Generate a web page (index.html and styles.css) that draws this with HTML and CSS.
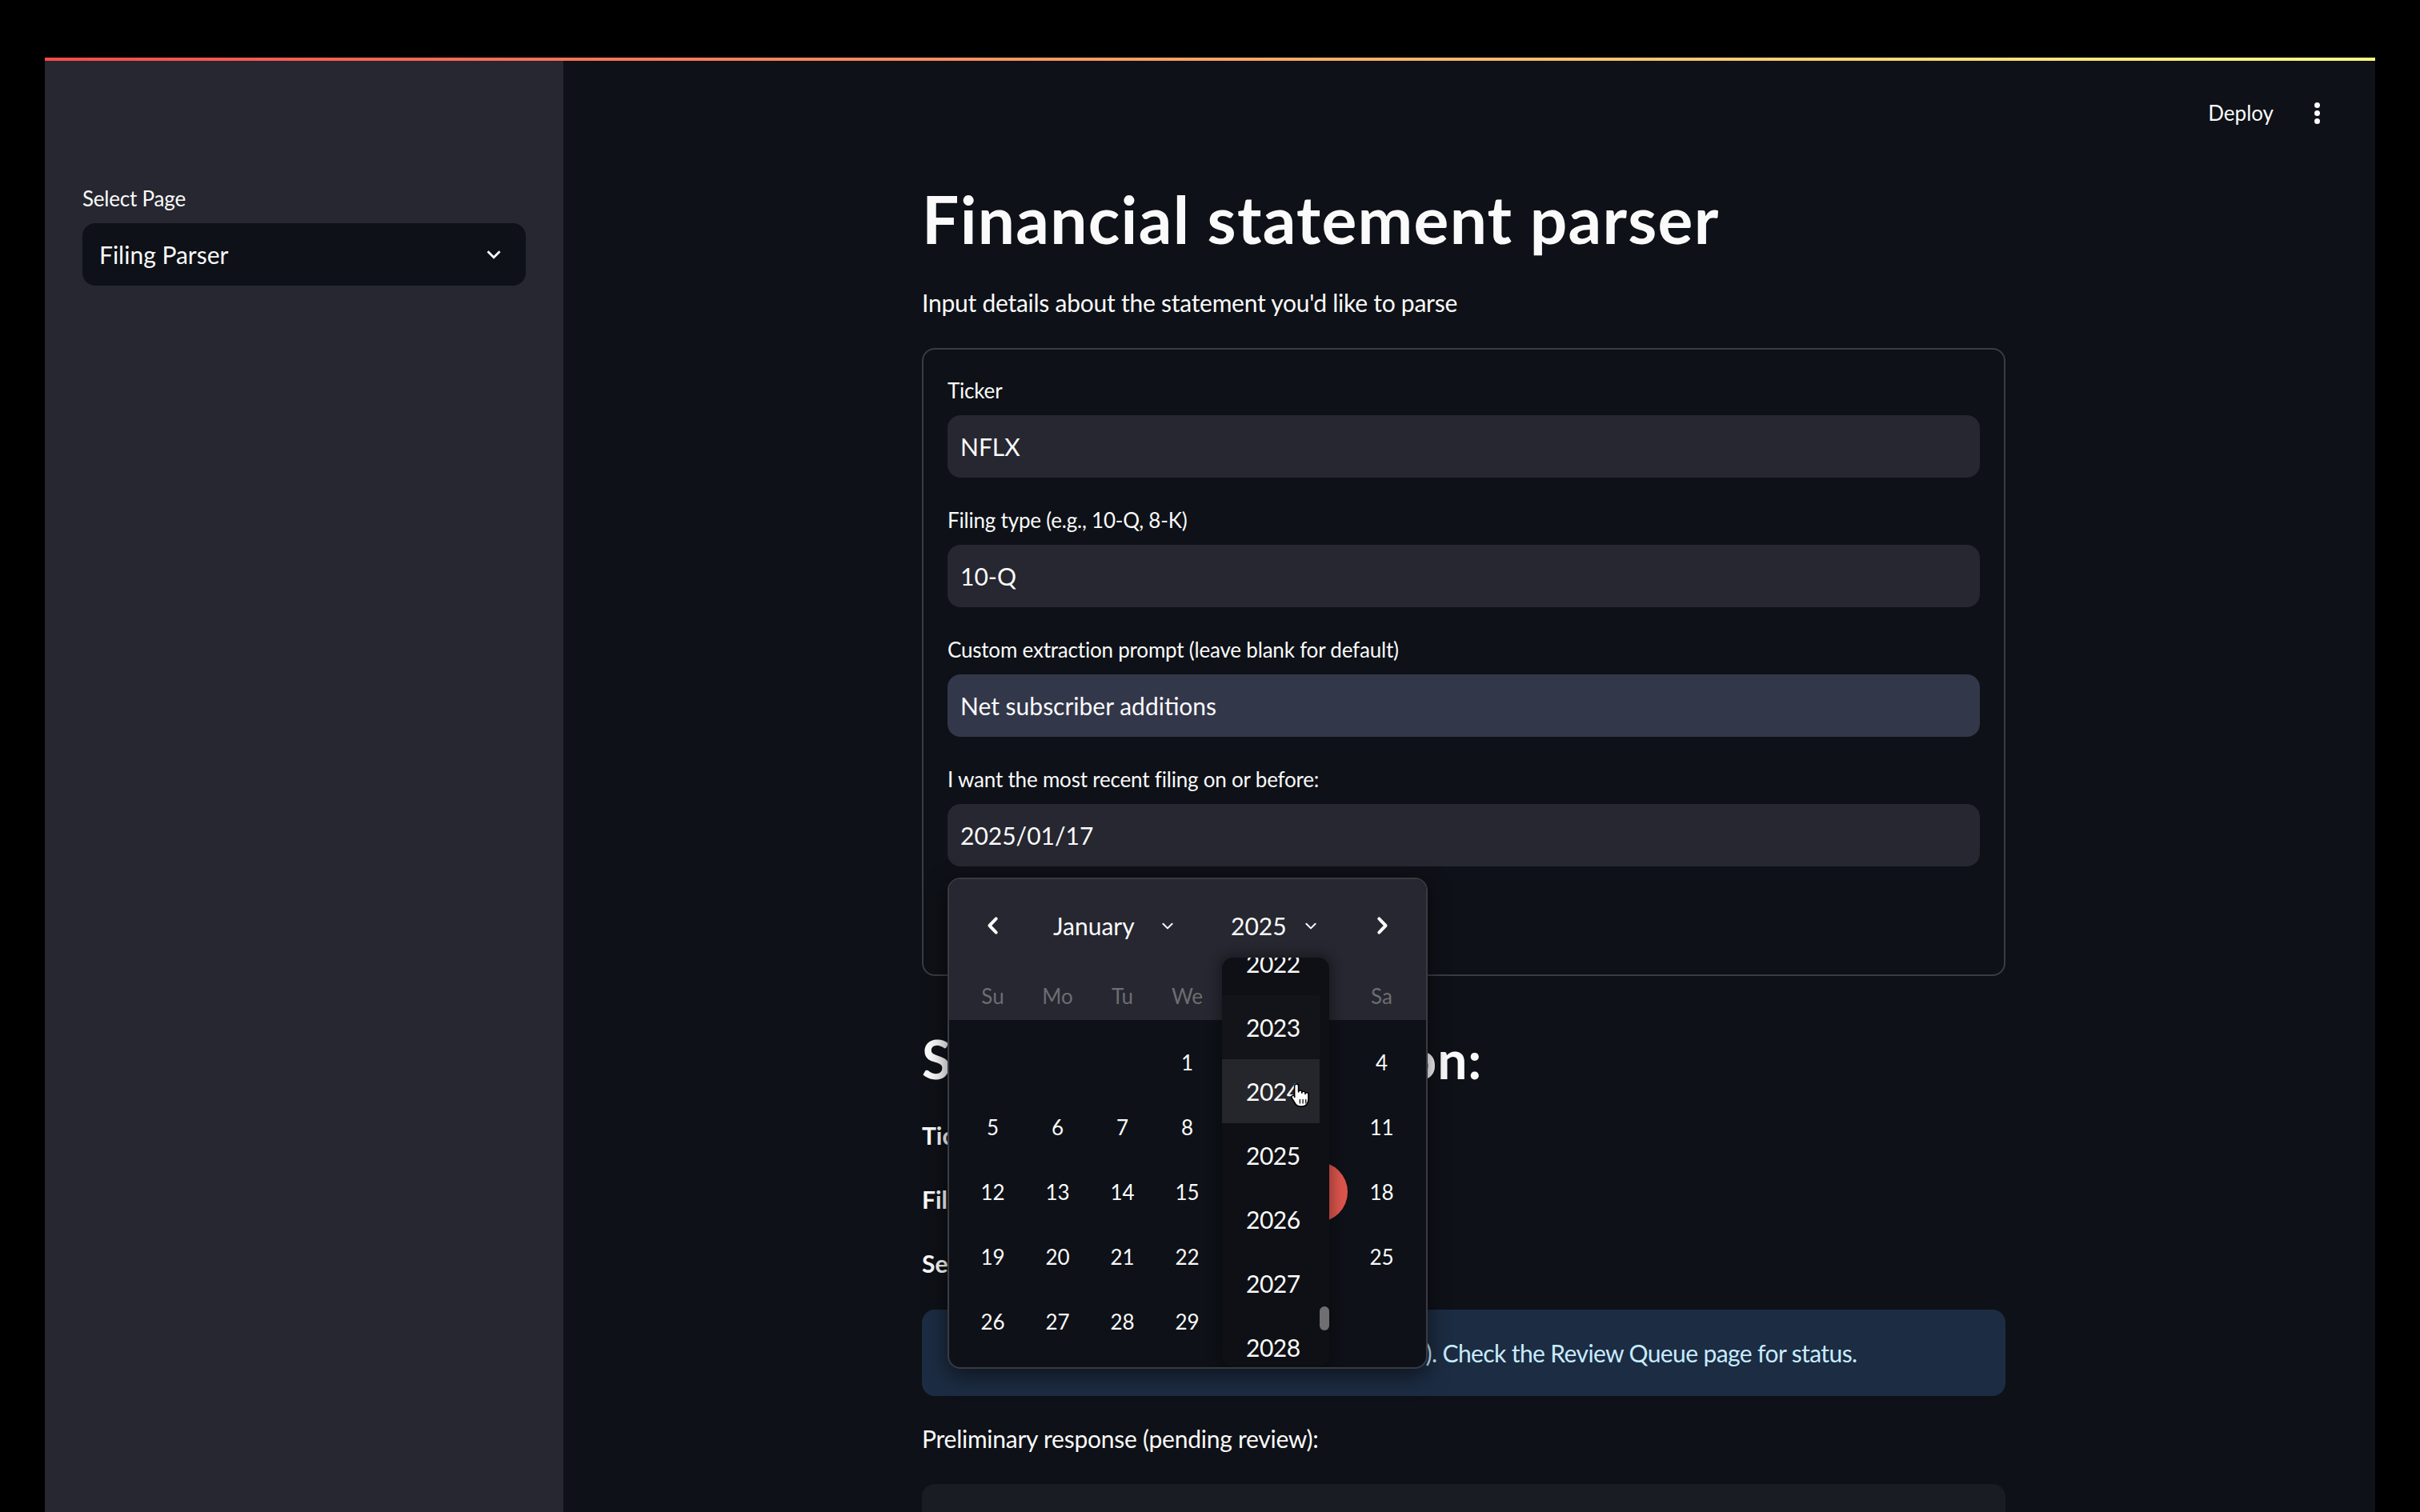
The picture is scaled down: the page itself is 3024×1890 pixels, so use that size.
FILE: index.html
```html
<!DOCTYPE html>
<html lang="en">
<head>
<meta charset="utf-8">
<title>Filing Parser</title>
<link rel="stylesheet" href="styles.css">
</head>
<body>
<div class="app">
  <div class="decoration"></div>
  <div class="shell">
    <aside class="sidebar">
      <div class="label">Select Page</div>
      <div class="select">
        <span>Filing Parser</span>
        <svg class="select-chev" viewBox="0 0 24 24" width="34" height="34"><path d="M16.59 8.59L12 13.17 7.41 8.59 6 10l6 6 6-6z" fill="#fafafa"/></svg>
      </div>
    </aside>
    <main class="main">
      <div class="toolbar">
        <span class="deploy">Deploy</span>
        <span class="kebab"><i></i><i></i><i></i></span>
      </div>
      <div class="block">
        <h1 class="title">Financial statement parser</h1>
        <p class="subtitle">Input details about the statement you'd like to parse</p>

        <div class="form">
          <div class="field">
            <div class="label">Ticker</div>
            <div class="input">NFLX</div>
          </div>
          <div class="field">
            <div class="label">Filing type (e.g., 10-Q, 8-K)</div>
            <div class="input">10-Q</div>
          </div>
          <div class="field">
            <div class="label">Custom extraction prompt (leave blank for default)</div>
            <div class="input filled">Net subscriber additions</div>
          </div>
          <div class="field date-field">
            <div class="label">I want the most recent filing on or before:</div>
            <div class="input">2025/01/17</div>

            <div class="datepop">
              <div class="cal-head">
                <div class="nav">
                  <span class="nav-btn">
                    <svg viewBox="0 0 24 24" width="32" height="32"><path d="M14.8 5.6L8.6 12l6.2 6.4" fill="none" stroke="#fafafa" stroke-width="3" stroke-linecap="round" stroke-linejoin="round"/></svg>
                  </span>
                  <span class="nav-sel month-sel">
                    <span>January</span>
                    <svg viewBox="0 0 16 16" width="18" height="18"><path d="M3 6l5 5 5-5" fill="none" stroke="#fafafa" stroke-width="1.8" stroke-linecap="round" stroke-linejoin="round"/></svg>
                  </span>
                  <span class="nav-gap"></span>
                  <span class="nav-sel year-sel">
                    <span>2025</span>
                    <svg viewBox="0 0 16 16" width="18" height="18"><path d="M3 6l5 5 5-5" fill="none" stroke="#fafafa" stroke-width="1.8" stroke-linecap="round" stroke-linejoin="round"/></svg>
                  </span>
                  <span class="nav-gap2"></span>
                  <span class="nav-btn">
                    <svg viewBox="0 0 24 24" width="32" height="32"><path d="M9.2 5.6l6.2 6.4-6.2 6.4" fill="none" stroke="#fafafa" stroke-width="3" stroke-linecap="round" stroke-linejoin="round"/></svg>
                  </span>
                </div>
                <div class="weekdays">
                  <span>Su</span><span>Mo</span><span>Tu</span><span>We</span><span>Th</span><span>Fr</span><span>Sa</span>
                </div>
              </div>
              <div class="days">
                <span></span><span></span><span></span>
                <span>1</span><span>2</span><span>3</span><span>4</span>
                <span>5</span><span>6</span><span>7</span><span>8</span><span>9</span><span>10</span><span>11</span>
                <span>12</span><span>13</span><span>14</span><span>15</span><span>16</span><span class="sel">17</span><span>18</span>
                <span>19</span><span>20</span><span>21</span><span>22</span><span>23</span><span>24</span><span>25</span>
                <span>26</span><span>27</span><span>28</span><span>29</span><span>30</span><span>31</span><span></span>
              </div>

              <div class="yearlist">
                <div class="yl-inner">
                  <div class="yl-item">2022</div>
                  <div class="yl-item prev">2023</div>
                  <div class="yl-item hover">2024</div>
                  <div class="yl-item">2025</div>
                  <div class="yl-item">2026</div>
                  <div class="yl-item">2027</div>
                  <div class="yl-item">2028</div>
                </div>
                <div class="yl-thumb"></div>
              </div>

              <svg class="cursor" viewBox="0 0 22 26" width="28" height="32"><path d="M7 1.5c1.1 0 2 .9 2 2v6.2c0-1 .8-1.6 1.8-1.6s1.7.6 1.7 1.6v1c0-1 .8-1.5 1.7-1.5s1.7.6 1.7 1.6v1c0-.9.8-1.4 1.6-1.4.9 0 1.6.6 1.6 1.6V17c0 4-2.5 7.5-6.5 7.5H11c-2.5 0-4-1-5.3-3L2.2 15.8c-.6-1-.2-2 .7-2.4.8-.4 1.8-.1 2.3.7L5 15V3.5c0-1.1.9-2 2-2z" fill="#fff" stroke="#000" stroke-width="1.3" stroke-linejoin="round"/><path d="M10.5 17v4.5M13.5 17v4.5M16.5 17v4.5" stroke="#000" stroke-width="1"/></svg>
            </div>
          </div>
          <div class="submit-row"><span class="submit">Submit</span></div>
        </div>

        <h2 class="h2">Submitted information:</h2>
        <p class="kv"><b>Ticker:</b> NFLX</p>
        <p class="kv"><b>Filing type:</b> 10-Q</p>
        <p class="kv"><b>Selected date:</b> 2025/01/17</p>

        <div class="info">Request submitted for review (request ID: 2417). Check the Review Queue page for status.</div>

        <p class="prelim">Preliminary response (pending review):</p>
        <div class="codebox"></div>
      </div>
    </main>
  </div>
</div>
</body>
</html>
```

FILE: styles.css
```css
* { box-sizing: border-box; }
html, body { margin: 0; padding: 0; }
body {
  background: #000;
  font-family: Lato, "Noto Sans", sans-serif;
  color: #fafafa;
  width: 3024px;
  height: 1890px;
  overflow: hidden;
}
.app {
  margin: 72px 56px 0;
  height: 1818px;
  display: flex;
  flex-direction: column;
  overflow: hidden;
  background: #0e1117;
}
.decoration {
  height: 4px;
  flex: none;
  background: linear-gradient(90deg, rgb(255, 75, 75), rgb(255, 253, 128));
}
.shell { flex: 1; display: flex; min-height: 0; }

/* sidebar */
.sidebar {
  width: 648px;
  flex: none;
  background: #262730;
  padding: 151px 47px 0;
}
.label {
  font-size: 26px;
  line-height: 42px;
  margin-bottom: 10px;
  color: #fafafa;
  letter-spacing: -0.2px;
}
.select {
  height: 78px;
  border-radius: 16px;
  background: #0e1117;
  display: flex;
  align-items: center;
  justify-content: space-between;
  padding: 0 23px 0 21px;
  font-size: 30px;
}

/* main */
.main { flex: 1; display: flex; flex-direction: column; min-width: 0; }
.toolbar {
  height: 130px;
  flex: none;
  display: flex;
  align-items: center;
  justify-content: flex-end;
  padding-right: 61px;
  gap: 42px;
}
.deploy { font-size: 26px; line-height: 40px; }
.kebab {
  width: 24px;
  height: 40px;
  display: flex;
  flex-direction: column;
  align-items: center;
  justify-content: center;
  gap: 3px;
}
.kebab i { display: block; width: 7px; height: 7px; border-radius: 50%; background: #fafafa; }

.block { width: 1354px; margin-left: 448px; padding-top: 19px; }
.title { font-size: 82px; line-height: 96px; font-weight: 700; margin: 0; letter-spacing: 1.3px; }
.subtitle { font-size: 30px; line-height: 48px; margin: 33px 0 0; letter-spacing: -0.25px; }

.form {
  margin-top: 33px;
  border: 2px solid #3a3c42;
  border-radius: 16px;
  padding: 30px;
}
.field + .field { margin-top: 32px; }
.input {
  height: 78px;
  border-radius: 16px;
  background: #262730;
  display: flex;
  align-items: center;
  padding: 0 16px;
  font-size: 30px;
}
.input.filled { background: #33374a; }
.date-field { position: relative; }
.submit-row { margin-top: 32px; height: 73px; }
.submit {
  display: inline-flex;
  align-items: center;
  height: 73px;
  padding: 0 24px;
  border: 2px solid #3a3c42;
  border-radius: 16px;
  font-size: 30px;
}

/* date picker popup */
.datepop {
  position: absolute;
  left: 0;
  top: calc(100% + 14px);
  width: 600px;
  height: 614px;
  border: 2px solid #3a3b42;
  border-radius: 16px;
  background: #0e1117;
  overflow: hidden;
  box-shadow: 0 8px 28px rgba(0, 0, 0, 0.55);
  z-index: 5;
}
.cal-head { background: #262730; }
.nav {
  height: 116px;
  display: flex;
  align-items: center;
  padding: 0 14px;
  font-size: 30px;
}
.nav-btn { width: 81px; flex: none; display: flex; justify-content: center; align-items: center; }
.nav-sel { display: flex; align-items: center; justify-content: space-between; flex: none; }
.month-sel { width: 200px; padding: 0 13px 0 35px; }
.year-sel { width: 160px; padding: 0 14px 0 37px; }
.nav-gap { width: 20px; flex: none; }
.nav-gap2 { width: 25px; flex: none; }
.weekdays {
  height: 60px;
  display: grid;
  grid-template-columns: repeat(7, 81px);
  padding: 0 14px;
  align-items: center;
  justify-items: center;
  font-size: 26px;
  color: #6d6d72;
}
.days {
  display: grid;
  grid-template-columns: repeat(7, 81px);
  grid-auto-rows: 81px;
  padding: 12px 14px 0;
  font-size: 26px;
}
.days span { display: flex; align-items: center; justify-content: center; position: relative; }
.days .sel::before {
  content: "";
  position: absolute;
  width: 76px;
  height: 76px;
  border-radius: 50%;
  background: #dc544d;
  z-index: -1;
}
.days .sel { z-index: 0; }

.yearlist {
  position: absolute;
  left: 341px;
  top: 98px;
  width: 134px;
  height: 512px;
  border-radius: 14px;
  background: #0e1015;
  overflow: hidden;
  box-shadow: 0 0 14px 6px rgba(0, 0, 0, 0.28);
  z-index: 2;
}
.yl-inner { margin-top: -33px; }
.yl-item {
  width: 122px;
  height: 80px;
  line-height: 80px;
  padding-left: 30px;
  font-size: 30px;
  color: #fafafa;
  letter-spacing: -0.5px;
}
.yl-item.prev { background: #131419; }
.yl-item.hover { background: #25262c; }
.yl-thumb {
  position: absolute;
  left: 122px;
  top: 436px;
  width: 12px;
  height: 30px;
  border-radius: 6px;
  background: #6e6e73;
}
.cursor { position: absolute; left: 425px; top: 254px; z-index: 3; }

/* results */
.h2 { font-size: 66px; line-height: 79px; font-weight: 700; margin: 64px 0 0; letter-spacing: 0.9px; }
.kv { font-size: 30px; line-height: 48px; margin: 32px 0 0; }
.kv b { font-weight: 700; }
.info {
  margin-top: 34px;
  padding: 30px 32px;
  border-radius: 16px;
  background: #1c2c42;
  color: #c7ebff;
  font-size: 30px;
  line-height: 48px;
  letter-spacing: -0.6px;
}
.prelim { font-size: 30px; line-height: 48px; margin: 29px 0 0; letter-spacing: -0.25px; }
.codebox { margin-top: 33px; height: 200px; border-radius: 16px; background: #1a1c24; }
```
